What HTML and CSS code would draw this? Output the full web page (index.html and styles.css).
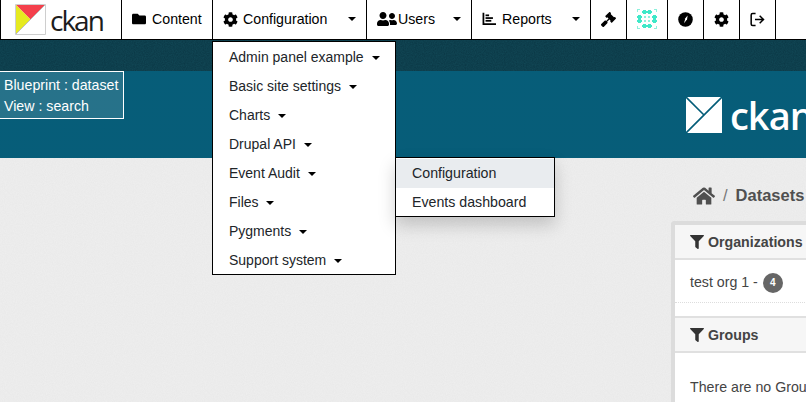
FILE: index.html
```html
<!DOCTYPE html>
<html lang="en">
<head>
  <meta charset="UTF-8">
  <meta name="viewport" content="width=device-width, initial-scale=1.0">
  <title>Datasets - ckan</title>
  <link rel="stylesheet" href="styles.css">
</head>
<body>
  <nav class="topbar">
    <a class="brand" href="#">
      <svg class="brand-mark" viewBox="0 0 32 32" width="31" height="31">
        <rect width="32" height="32" fill="#fff"/>
        <path d="M1 1H31L16 16z" fill="#f4404c"/>
        <path d="M1 1V31L16 16z" fill="#e6ea20"/>
        <path d="M1 31L31 1" stroke="#bbb" stroke-width="1"/>
        <path d="M.5 31.5V.5H31.5M31.5 .5V31.5H.5" fill="none" stroke="#ccc" stroke-width="1"/>
      </svg>
      <span class="brand-text">ckan</span>
    </a>
    <a class="tab tab-content" href="#">
      <svg class="icon" viewBox="0 0 512 512"><path d="M464 128H272l-64-64H48C21.49 64 0 85.49 0 112v288c0 26.51 21.49 48 48 48h416c26.51 0 48-21.49 48-48V176c0-26.51-21.49-48-48-48z"/></svg>
      Content
    </a>
    <a class="tab tab-config" href="#">
      <svg class="icon" viewBox="0 0 512 512"><path d="M487.4 315.7l-42.6-24.6c4.3-23.2 4.3-47 0-70.2l42.6-24.6c4.9-2.8 7.1-8.6 5.5-14-11.1-35.6-30-67.8-54.7-94.6-3.8-4.1-10-5.1-14.8-2.3L380.8 110c-17.9-15.4-38.5-27.3-60.8-35.1V25.8c0-5.6-3.9-10.5-9.4-11.7-36.7-8.2-74.3-7.8-109.2 0-5.5 1.2-9.4 6.1-9.4 11.7V75c-22.2 7.9-42.8 19.8-60.8 35.1L88.7 85.5c-4.9-2.8-11-1.9-14.8 2.3-24.7 26.7-43.6 58.9-54.7 94.6-1.7 5.4.6 11.2 5.5 14L67.3 221c-4.3 23.2-4.3 47 0 70.2l-42.6 24.6c-4.9 2.8-7.1 8.6-5.5 14 11.1 35.6 30 67.8 54.7 94.6 3.8 4.1 10 5.1 14.8 2.3l42.6-24.6c17.9 15.4 38.5 27.3 60.8 35.1v49.2c0 5.6 3.9 10.5 9.4 11.7 36.7 8.2 74.3 7.8 109.2 0 5.5-1.2 9.4-6.1 9.4-11.7v-49.2c22.2-7.9 42.8-19.8 60.8-35.1l42.6 24.6c4.9 2.8 11 1.9 14.8-2.3 24.7-26.7 43.6-58.9 54.7-94.6 1.5-5.5-.7-11.3-5.6-14.1zM256 336c-44.1 0-80-35.9-80-80s35.9-80 80-80 80 35.9 80 80-35.9 80-80 80z"/></svg>
      Configuration
      <span class="caret"></span>
    </a>
    <a class="tab tab-users" href="#">
      <svg class="icon icon-wide" viewBox="0 0 640 512"><path d="M192 256c61.9 0 112-50.1 112-112S253.9 32 192 32 80 82.1 80 144s50.1 112 112 112zm76.8 32h-8.3c-20.8 10-43.9 16-68.5 16s-47.6-6-68.5-16h-8.3C51.6 288 0 339.6 0 403.2V432c0 26.5 21.5 48 48 48h288c26.5 0 48-21.5 48-48v-28.8c0-63.6-51.6-115.2-115.2-115.2zM480 256c53 0 96-43 96-96s-43-96-96-96-96 43-96 96 43 96 96 96zm48 32h-3.8c-13.9 4.8-28.6 8-44.2 8s-30.3-3.2-44.2-8H432c-20.4 0-39.2 5.9-55.7 15.4 24.4 26.3 39.7 61.2 39.7 99.8v38.4c0 2.2-.5 4.3-.6 6.4H592c26.5 0 48-21.5 48-48 0-61.9-50.1-112-112-112z"/></svg>
      Users
      <span class="caret"></span>
    </a>
    <a class="tab tab-reports" href="#">
      <svg class="icon" viewBox="0 0 512 512"><path d="M20 30h64v378h428v64H20z"/><rect x="130" y="90" width="130" height="64"/><rect x="130" y="190" width="270" height="64"/><rect x="130" y="290" width="210" height="64"/></svg>
      Reports
      <span class="caret"></span>
    </a>
    <a class="tab tab-icon" href="#">
      <svg class="icon" viewBox="0 0 512 512"><path d="M504.971 199.362l-22.627-22.627c-9.373-9.373-24.569-9.373-33.941 0l-5.657 5.657L329.608 69.255l5.657-5.657c9.373-9.373 9.373-24.569 0-33.941L312.638 7.029c-9.373-9.373-24.569-9.373-33.941 0L154.246 131.48c-9.373 9.373-9.373 24.569 0 33.941l22.627 22.627c9.373 9.373 24.569 9.373 33.941 0l5.657-5.657 39.598 39.598-81.04 81.04-5.657-5.657c-12.497-12.497-32.758-12.497-45.255 0L9.373 412.118c-12.497 12.497-12.497 32.758 0 45.255l45.255 45.255c12.497 12.497 32.758 12.497 45.255 0l114.745-114.745c12.497-12.497 12.497-32.758 0-45.255l-5.657-5.657 81.04-81.04 39.598 39.598-5.657 5.657c-9.373 9.373-9.373 24.569 0 33.941l22.627 22.627c9.373 9.373 24.569 9.373 33.941 0l124.451-124.451c9.372-9.372 9.372-24.568 0-33.941z"/></svg>
    </a>
    <a class="tab tab-dots" href="#">
      <svg viewBox="0 0 20 20" width="20" height="20">
        <path fill="#3fe8c8" d="M6 1h3v1h2V1h3v1h1v2h-1v1h-3V4H9v1H6V4H5V2h1zM1 6h3v1h1v2H4v2h1v2H4v1H1v-1H0v-2h1V9H0V7h1zM16 6h3v1h1v2h-1v2h1v2h-1v1h-3v-1h-1v-2h1V9h-1V7h1zM6 15h3v1h2v-1h3v1h1v2h-1v1h-3v-1H9v1H6v-1H5v-2h1z"/>
        <path fill="#8df0dc" d="M7 7h2v2H7zM11 7h2v2h-2zM7 11h2v2H7zM11 11h2v2h-2zM0 0h3v1H1v2H0zM17 0h3v3h-1V1h-2zM0 17h1v2h2v1H0zM19 17h1v3h-3v-1h2z"/>
      </svg>
    </a>
    <a class="tab tab-icon" href="#">
      <svg class="icon icon-round" viewBox="0 0 512 512"><circle cx="256" cy="256" r="248"/><path d="M205 385l45-170 80-95-20 125z" fill="#fff"/></svg>
    </a>
    <a class="tab tab-icon" href="#">
      <svg class="icon" viewBox="0 0 512 512"><path d="M487.4 315.7l-42.6-24.6c4.3-23.2 4.3-47 0-70.2l42.6-24.6c4.9-2.8 7.1-8.6 5.5-14-11.1-35.6-30-67.8-54.7-94.6-3.8-4.1-10-5.1-14.8-2.3L380.8 110c-17.9-15.4-38.5-27.3-60.8-35.1V25.8c0-5.6-3.9-10.5-9.4-11.7-36.7-8.2-74.3-7.8-109.2 0-5.5 1.2-9.4 6.1-9.4 11.7V75c-22.2 7.9-42.8 19.8-60.8 35.1L88.7 85.5c-4.9-2.8-11-1.9-14.8 2.3-24.7 26.7-43.6 58.9-54.7 94.6-1.7 5.4.6 11.2 5.5 14L67.3 221c-4.3 23.2-4.3 47 0 70.2l-42.6 24.6c-4.9 2.8-7.1 8.6-5.5 14 11.1 35.6 30 67.8 54.7 94.6 3.8 4.1 10 5.1 14.8 2.3l42.6-24.6c17.9 15.4 38.5 27.3 60.8 35.1v49.2c0 5.6 3.9 10.5 9.4 11.7 36.7 8.2 74.3 7.8 109.2 0 5.5-1.2 9.4-6.1 9.4-11.7v-49.2c22.2-7.9 42.8-19.8 60.8-35.1l42.6 24.6c4.9 2.8 11 1.9 14.8-2.3 24.7-26.7 43.6-58.9 54.7-94.6 1.5-5.5-.7-11.3-5.6-14.1zM256 336c-44.1 0-80-35.9-80-80s35.9-80 80-80 80 35.9 80 80-35.9 80-80 80z"/></svg>
    </a>
    <a class="tab tab-icon" href="#">
      <svg class="icon" viewBox="0 0 512 512"><path d="M190 50H90a50 50 0 0 0-50 50v312a50 50 0 0 0 50 50h100" fill="none" stroke="#000" stroke-width="52"/><path d="M170 256H450M330 130l130 126-130 126" fill="none" stroke="#000" stroke-width="52"/></svg>
    </a>
  </nav>

  <div class="account-band"></div>

  <header class="hero">
    <a class="hero-logo" href="#">
      <svg viewBox="0 0 36 36" width="36" height="36">
        <rect width="36" height="36" fill="#fff"/>
        <path d="M0 0L18 18M36 0L0 36" fill="none" stroke="#035c78" stroke-width="1.6"/>
      </svg>
      <span class="hero-text">ckan</span>
    </a>
  </header>

  <main class="content">
    <div class="breadcrumb">
      <svg class="home" viewBox="0 0 576 512"><path d="M280.37 148.26L96 300.11V464a16 16 0 0 0 16 16l112.06-.29a16 16 0 0 0 15.92-16V368a16 16 0 0 1 16-16h64a16 16 0 0 1 16 16v95.64a16 16 0 0 0 16 16.05L464 480a16 16 0 0 0 16-16V300L295.67 148.26a12.19 12.19 0 0 0-15.3 0zM571.6 251.47L488 182.56V44.05a12 12 0 0 0-12-12h-56a12 12 0 0 0-12 12v72.61L318.47 43a48 48 0 0 0-61 0L4.34 251.47a12 12 0 0 0-1.6 16.9l25.5 31A12 12 0 0 0 45.15 301l235.22-193.74a12.19 12.19 0 0 1 15.3 0L530.9 301a12 12 0 0 0 16.9-1.6l25.5-31a12 12 0 0 0-1.7-16.93z"/></svg>
      <span class="crumb-sep">/</span>
      <strong>Datasets</strong>
    </div>

    <aside class="sidebar">
      <section class="facet">
        <h2 class="facet-title">
          <svg class="filter" viewBox="0 0 512 512"><path d="M487.976 0H24.028C2.71 0-8.047 25.866 7.058 40.971L192 225.941V432c0 7.831 3.821 15.17 10.237 19.662l80 55.98C298.02 518.69 320 507.493 320 487.98V225.941l184.947-184.97C520.021 25.896 509.338 0 487.976 0z"/></svg>
          Organizations
        </h2>
        <div class="facet-row">test org 1 - <span class="badge">4</span></div>
      </section>
      <section class="facet">
        <h2 class="facet-title">
          <svg class="filter" viewBox="0 0 512 512"><path d="M487.976 0H24.028C2.71 0-8.047 25.866 7.058 40.971L192 225.941V432c0 7.831 3.821 15.17 10.237 19.662l80 55.98C298.02 518.69 320 507.493 320 487.98V225.941l184.947-184.97C520.021 25.896 509.338 0 487.976 0z"/></svg>
          Groups
        </h2>
        <p class="facet-empty">There are no Groups that match this search</p>
      </section>
    </aside>
  </main>

  <div class="debug-box">
    <div>Blueprint : dataset</div>
    <div>View : search</div>
  </div>

  <ul class="menu">
    <li>Admin panel example <span class="caret"></span></li>
    <li>Basic site settings <span class="caret"></span></li>
    <li>Charts <span class="caret"></span></li>
    <li>Drupal API <span class="caret"></span></li>
    <li>Event Audit <span class="caret"></span></li>
    <li>Files <span class="caret"></span></li>
    <li>Pygments <span class="caret"></span></li>
    <li>Support system <span class="caret"></span></li>
  </ul>

  <ul class="menu submenu">
    <li class="active">Configuration</li>
    <li>Events dashboard</li>
  </ul>
</body>
</html>
```

FILE: styles.css
```css
* {
  box-sizing: border-box;
}

html, body {
  height: 100%;
}

body {
  position: relative;
  margin: 0;
  overflow: hidden;
  font-family: "Liberation Sans", Arial, sans-serif;
  font-size: 14.2px;
  color: #212529;
  background-color: #e8e8e8;
  background-image: url("data:image/svg+xml,%3Csvg xmlns='http://www.w3.org/2000/svg' width='200' height='200'%3E%3Cfilter id='n'%3E%3CfeTurbulence type='fractalNoise' baseFrequency='.9' numOctaves='2'/%3E%3CfeColorMatrix values='0 0 0 0 1 0 0 0 0 1 0 0 0 0 1 0 0 0 .5 0'/%3E%3C/filter%3E%3Crect width='200' height='200' filter='url(%23n)' opacity='.6'/%3E%3C/svg%3E");
}

a {
  color: inherit;
  text-decoration: none;
}

/* top navigation */
.topbar {
  display: flex;
  height: 40px;
  background-color: #fff;
  border-bottom: 1px solid #000;
}

.brand,
.tab {
  display: flex;
  align-items: center;
  flex: none;
  padding-bottom: 1px;
  border-right: 1px solid #000;
  color: #000;
}

.brand {
  width: 122px;
  padding-left: 14px;
  padding-bottom: 0;
  border-left: 1px solid #000;
}

.brand-text {
  margin-left: 4px;
  font-family: "Open Sans", sans-serif;
  font-size: 28px;
  letter-spacing: -2px;
  color: #1c1c1c;
}

.tab {
  padding-left: 10px;
  white-space: nowrap;
}

.tab .icon {
  margin-right: 6px;
}

.tab .caret {
  margin-left: auto;
  margin-right: 10px;
}

.tab-content {
  width: 91px;
}

.tab-config {
  width: 154px;
}

.tab-config .icon {
  width: 15px;
  height: 15px;
  margin-right: 5px;
}

.tab-users {
  width: 105px;
}

.tab-users .icon {
  margin-right: 1px;
}

.tab-reports {
  width: 119px;
}

.tab-icon {
  width: 36px;
  justify-content: center;
  padding-left: 0;
}

.tab-icon .icon {
  width: 15px;
  height: 15px;
  margin-right: 0;
}

.tab-dots {
  width: 41px;
  justify-content: center;
  padding-left: 0;
}

.icon {
  width: 14px;
  height: 14px;
  flex: none;
}

.icon-wide {
  width: 20px;
  height: 16px;
}

.caret {
  display: inline-block;
  width: 0;
  height: 0;
  margin-left: 5px;
  vertical-align: 3px;
  border-top: 4.5px solid #000;
  border-left: 4.5px solid transparent;
  border-right: 4.5px solid transparent;
}

/* header bands */
.account-band {
  height: 31px;
  background-color: #0a3644;
  background-image: inherit;
  background-blend-mode: soft-light;
}

.hero {
  display: flex;
  justify-content: flex-start;
  height: 87px;
  padding: 26px 0 0 686px;
  background-color: #025a76;
  background-image: linear-gradient(rgba(255, 255, 255, 0.02), rgba(255, 255, 255, 0.02));
}

.hero-logo {
  display: flex;
  align-items: flex-start;
  flex: none;
}

.hero-text {
  margin-left: 8px;
  font-family: "Open Sans", sans-serif;
  font-size: 38px;
  line-height: 36px;
  font-weight: 600;
  letter-spacing: -1px;
  color: #fff;
}

/* page body */
.content {
  width: 806px;
  height: 244px;
  padding-left: 671px;
  overflow: hidden;
}

.breadcrumb {
  display: flex;
  align-items: center;
  gap: 8px;
  height: 63px;
  padding: 12px 0 0 22px;
  white-space: nowrap;
  font-size: 16.5px;
  color: #505050;
}

.crumb-sep {
  color: #777;
}

.home {
  width: 22px;
  height: 20px;
  fill: #505050;
}

.sidebar {
  width: 300px;
  padding-bottom: 30px;
  background-color: #fff;
  border: 4px solid #dcdcdc;
  border-right: 0;
  border-bottom: 0;
  border-top-left-radius: 4px;
}

.facet-title {
  display: flex;
  align-items: center;
  gap: 4px;
  height: 35px;
  margin: 0;
  padding-left: 15px;
  font-size: 14.2px;
  font-weight: 700;
  color: #444;
  background-color: #f6f6f6;
  border-bottom: 2px solid #e0e0e0;
}

.filter {
  width: 14px;
  height: 14px;
  fill: #333;
}

.facet-row {
  height: 43px;
  padding: 13px 0 0 15px;
  color: #444;
  border-bottom: 1px dotted #ddd;
}

.facet + .facet {
  margin-top: 13px;
  border-top: 2px solid #e0e0e0;
}

.badge {
  display: inline-block;
  width: 20px;
  height: 20px;
  margin-left: 1px;
  border-radius: 50%;
  font-size: 10px;
  font-weight: 700;
  line-height: 20px;
  text-align: center;
  vertical-align: middle;
  color: #fff;
  background-color: #666;
}

.facet-empty {
  margin: 26px 0 0;
  padding-left: 15px;
  white-space: nowrap;
  color: #444;
}

/* overlays */
.debug-box {
  position: absolute;
  left: -2px;
  top: 71px;
  width: 126px;
  height: 48px;
  padding: 3px 0 0 5px;
  line-height: 21px;
  color: #fff;
  background-color: rgba(255, 255, 255, 0.13);
  border: 1px solid #fff;
}

.menu {
  position: absolute;
  left: 212px;
  top: 41px;
  width: 184px;
  height: 234px;
  margin: 0;
  padding: 1px 0 0;
  font-size: 14px;
  list-style: none;
  color: #212529;
  background-color: #fff;
  border: 1px solid #000;
}

.menu li {
  height: 29px;
  padding-left: 16px;
  line-height: 29px;
  white-space: nowrap;
}

.menu .caret {
  margin-left: 4px;
  vertical-align: 2px;
}

.submenu {
  left: 395px;
  top: 157px;
  width: 160px;
  height: 60px;
  padding: 1px 0 0;
  font-size: 14.2px;
  box-shadow: 0 8px 16px rgba(0, 0, 0, 0.18);
}

.submenu .active {
  background-color: #e9ecef;
}
```
